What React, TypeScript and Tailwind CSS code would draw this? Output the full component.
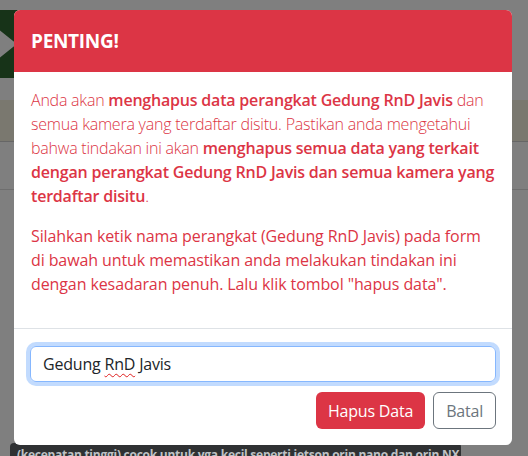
import React from "react";

const App = () => {
  return (
    <div className="relative w-[528px] h-[456px] overflow-hidden bg-white font-['Open_Sans',sans-serif]">
      {/* page behind the modal */}
      <div className="flex flex-col">
        <div className="h-[100px] flex items-start pt-[10px]">
          <div className="w-[28px] h-[68px] bg-[#2f6630] [clip-path:polygon(0_0,100%_0,100%_100%,0_100%,0_70%,60%_50%,0_30%)]" />
        </div>
        <div className="h-[42px] bg-[#f4f0de] border-b border-[#ccc]" />
        <div className="h-[48px] border-b border-[#ddd]" />
        <div className="flex flex-col gap-[10px] pl-[16px] pt-[50px]">
          <div className="h-[30px] w-[40px] rounded-md border border-[#ccc]" />
          <div className="h-[35px] w-[40px] rounded-md border border-[#ccc]" />
          <div className="h-[47px] w-[40px] rounded-md border border-[#ccc]" />
          <div className="h-[35px] w-[40px] rounded-md border border-[#ccc]" />
        </div>
      </div>

      {/* backdrop */}
      <div className="absolute inset-0 bg-black/50" />

      {/* tooltip peeking below */}
      <div className="absolute left-[10px] top-[443px] w-[451px] h-[20px] rounded-t-[4px] bg-[#2f3133] px-[7px] pt-[4px] text-[12px] font-bold leading-[16px] tracking-[-0.25px] text-[#bfc2c5] whitespace-nowrap overflow-hidden">
        (kecepatan tinggi) cocok untuk vga kecil seperti jetson orin nano dan orin NX
      </div>

      {/* modal */}
      <div className="absolute left-[14px] top-[10px] w-[498px] rounded-[6px] bg-white overflow-hidden">
        <div className="h-[62px] bg-[#dc3545] px-[17px] flex items-center">
          <h5 className="text-[19px] font-bold text-white leading-none tracking-[-0.3px]">PENTING!</h5>
        </div>
        <div className="px-[17px] pt-[16px] pb-[16px] text-[16px] leading-[24px] text-[#dc3545]">
          <p className="mb-[16px] font-light tracking-[-0.22px]">
            Anda akan{" "}
            <b className="font-semibold tracking-[-0.2px]">menghapus data perangkat Gedung RnD Javis</b>{" "}
            dan semua kamera yang terdaftar disitu. Pastikan anda mengetahui bahwa tindakan ini
            akan{" "}
            <b className="font-semibold tracking-[-0.2px]">
              menghapus semua data yang terkait dengan perangkat Gedung RnD Javis dan semua kamera
              yang terdaftar disitu
            </b>
            .
          </p>
          <p className="mb-[16px] tracking-[-0.1px]">
            Silahkan ketik nama perangkat (Gedung RnD Javis) pada form di bawah untuk memastikan
            anda melakukan tindakan ini dengan kesadaran penuh. Lalu klik tombol "hapus data".
          </p>
        </div>
        <div className="border-t border-[#dee2e6] px-[12px] pt-[13px] pb-[12px] flex flex-wrap justify-end tracking-[-0.2px]">
          <div className="m-[4px] w-full h-[36px] rounded-[6px] border border-[#86b7fe] ring-4 ring-[#0d6efd]/25 px-[12px] flex items-center text-[16px] text-[#212529]">
            Gedung&nbsp;
            <span className="underline decoration-wavy decoration-[#e02020] underline-offset-[3px] decoration-1">
              RnD
            </span>
            &nbsp;Javis
          </div>
          <button className="mx-[4px] mt-[6px] mb-[4px] h-[37px] px-[12px] rounded-[6px] bg-[#dc3545] text-white text-[16px]">
            Hapus Data
          </button>
          <button className="mx-[4px] mt-[6px] mb-[4px] h-[37px] px-[12px] rounded-[6px] border border-[#6c757d] text-[#6c757d] text-[16px]">
            Batal
          </button>
        </div>
      </div>
    </div>
  );
};

export default App;
